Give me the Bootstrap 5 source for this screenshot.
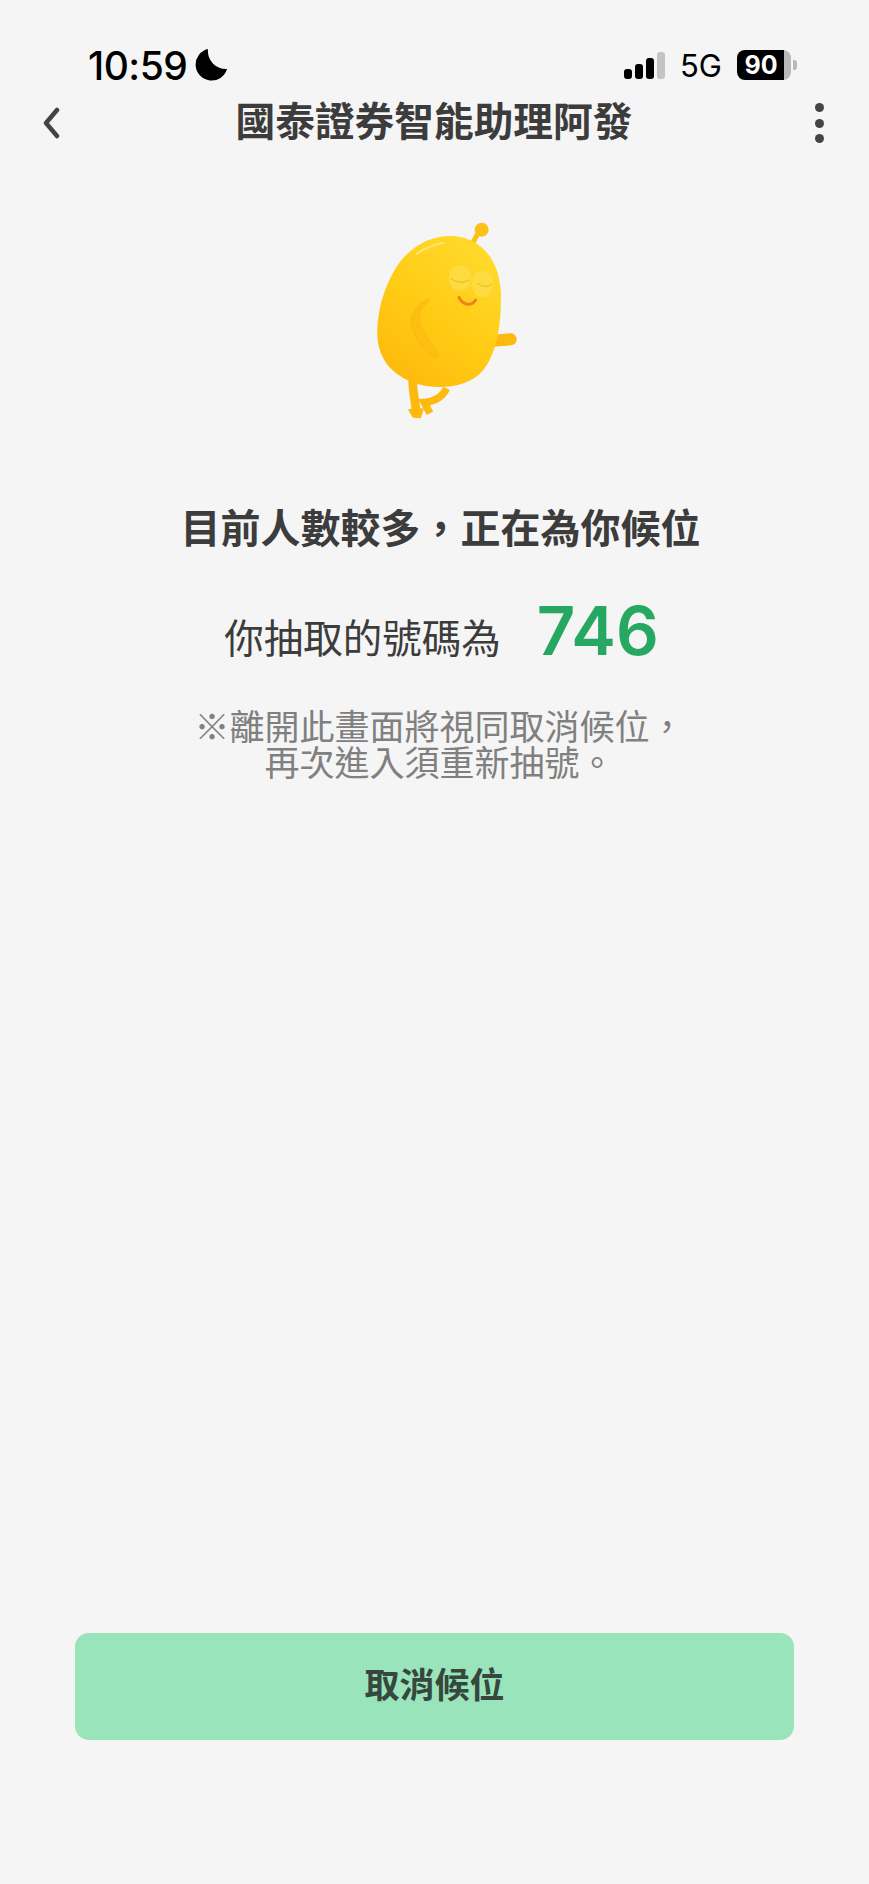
<!DOCTYPE html>
<html lang="zh-Hant">
<head>
    <meta charset="UTF-8">
    <meta name="viewport" content="width=device-width, initial-scale=1.0">
    <title>國泰證券智能助理阿發</title>
    <link rel="stylesheet" href="https://cdn.jsdelivr.net/npm/bootstrap@5.3.0/dist/css/bootstrap.min.css">
    <style>
        body { background: #f5f5f5; font-family: "Liberation Sans", "Noto Sans CJK TC", sans-serif; color: #3c3c3c; }
        .page-wrap { height: 1884px; }
        .status-row { height: 50px; margin-top: 40px; padding: 0 72px 0 88px; color: #000; }
        .status-time { font-family: Inter, sans-serif; font-size: 39px; font-weight: 500; line-height: 1; letter-spacing: -0.5px; }
        .status-net { font-family: Inter, sans-serif; font-size: 31px; line-height: 1; margin: 0 15px; }
        .signal-bars { height: 27px; gap: 3px; }
        .signal-bars span { width: 8px; background: #000; border-radius: 3px; }
        .battery-body { width: 54px; height: 30px; border-radius: 8px; color: #fff; font-family: Inter, sans-serif; font-size: 25px; font-weight: 700; line-height: 30px; padding-right: 6px; background: linear-gradient(90deg, #000 87%, #b9b9b9 87%); }
        .battery-nub { width: 4px; height: 10px; background: #b9b9b9; border-radius: 0 3px 3px 0; margin-left: 2px; }
        .top-bar { height: 66px; padding: 0 45px 0 42px; }
        .top-title { font-size: 39.7px; font-weight: 700; line-height: 1; white-space: nowrap; margin-right: 7px; }
        .top-dot { width: 9px; height: 9px; background: #444; border-radius: 50%; }
        .mascot-box { margin-top: 44px; height: 240px; padding-left: 21px; }
        .wait-title { font-size: 40px; font-weight: 700; line-height: 1.2; margin-top: 65px; margin-bottom: 0; padding-left: 12px; }
        .ticket-row { margin-top: 42px; height: 80px; padding-left: 14px; }
        .ticket-label { font-size: 39.5px; line-height: 1; margin-top: 10px; }
        .ticket-num { font-family: Inter, sans-serif; font-size: 67px; font-weight: 600; color: #27a862; line-height: 1; margin-left: 36px; margin-bottom: 10px; }
        .leave-note { font-size: 35px; line-height: 36px; color: #808080; margin-top: 35px; padding-left: 10px; }
        .cancel-btn { width: 719px; height: 107px; margin: auto 0 144px 75px; background: #9ae4bb; border: 0; border-radius: 14px; color: #36473d; font-size: 35px; font-weight: 700; }
        .cancel-btn:hover { background: #9ae4bb; color: #36473d; }
    </style>
</head>
<body>
<div class="page-wrap d-flex flex-column">
    <div class="status-row d-flex align-items-center">
        <span class="status-time">10:59</span>
        <svg width="32" height="32" viewBox="0 0 32 32" class="ms-2"><path d="M13 0 A16 16 0 1 0 32 20 A18 18 0 0 1 13 0 Z" fill="#000"/></svg>
        <div class="ms-auto d-flex align-items-center">
            <div class="signal-bars d-flex align-items-end">
                <span style="height: 10px"></span>
                <span style="height: 15px"></span>
                <span style="height: 21px"></span>
                <span style="height: 27px; background: #c4c4c4"></span>
            </div>
            <span class="status-net">5G</span>
            <div class="battery-body text-center">90</div>
            <div class="battery-nub"></div>
        </div>
    </div>

    <div class="top-bar d-flex align-items-center justify-content-between">
        <svg width="18" height="32" viewBox="0 0 18 32"><path d="M15 3 L4 16 L15 29" fill="none" stroke="#444" stroke-width="4.5" stroke-linecap="round" stroke-linejoin="round"/></svg>
        <div class="top-title">國泰證券智能助理阿發</div>
        <div class="d-flex flex-column" style="gap: 6.5px">
            <div class="top-dot"></div>
            <div class="top-dot"></div>
            <div class="top-dot"></div>
        </div>
    </div>

    <div class="mascot-box text-center">
        <svg width="190" height="240" viewBox="0 0 570 720">
            <defs>
                <linearGradient id="bodyFill" x1="0.85" y1="0" x2="0.2" y2="1">
                    <stop offset="0" stop-color="#ffdb2e"/>
                    <stop offset="0.55" stop-color="#ffcb14"/>
                    <stop offset="1" stop-color="#feb90c"/>
                </linearGradient>
            </defs>
            <path d="M365 135 L388 92" stroke="#fdc116" stroke-width="15" fill="none"/>
            <circle cx="395" cy="89" r="21" fill="#fdc116"/>
            <path d="M188 540 C188 580 198 610 198 635" stroke="#fdb90d" stroke-width="26" fill="none"/>
            <path d="M290 565 C275 595 250 605 222 607 L240 640" stroke="#fdb90d" stroke-width="22" fill="none"/>
            <path d="M178 630 L218 628 L210 652 L190 650 Z" fill="#fdb90d" stroke="#fdb90d" stroke-width="6" stroke-linejoin="round"/>
            <path d="M430 422 L482 418" stroke="#fdb90d" stroke-width="36" stroke-linecap="round" fill="none"/>
            <path d="M300 108 C385 108 445 170 452 270 C456 350 445 455 400 510 C355 565 260 572 190 548 C120 522 82 470 82 400 C82 320 110 240 150 185 C190 135 245 108 300 108 Z" fill="url(#bodyFill)"/>
            <path d="M200 162 C220 146 250 134 280 128" stroke="#ffe674" stroke-width="6" stroke-linecap="round" fill="none"/>
            <ellipse cx="330" cy="234" rx="34" ry="38" fill="#ffdb42"/>
            <ellipse cx="398" cy="252" rx="32" ry="40" fill="#ffdb42"/>
            <path d="M303 236 C318 248 340 250 358 240" stroke="#f3c62c" stroke-width="5" fill="none" stroke-linecap="round"/>
            <path d="M382 250 C395 260 410 262 424 254" stroke="#f3c62c" stroke-width="5" fill="none" stroke-linecap="round"/>
            <path d="M327 292 C338 316 364 320 377 300" stroke="#f0801a" stroke-width="9" fill="none" stroke-linecap="round"/>
            <path d="M235 295 C200 315 175 345 185 380 C197 420 225 450 248 472 C262 478 268 462 258 450 C235 420 208 385 208 350 C210 325 225 315 240 300" fill="#fdbe12" stroke="#f7b30c" stroke-width="2"/>
        </svg>
    </div>

    <h1 class="wait-title text-center">目前人數較多，正在為你候位</h1>

    <div class="ticket-row d-flex justify-content-center align-items-center">
        <span class="ticket-label">你抽取的號碼為</span>
        <span class="ticket-num">746</span>
    </div>

    <p class="leave-note text-center mb-0">※離開此畫面將視同取消候位，<br>再次進入須重新抽號。</p>

    <button type="button" class="btn cancel-btn">取消候位</button>
</div>
<script src="https://cdn.jsdelivr.net/npm/bootstrap@5.3.0/dist/js/bootstrap.bundle.min.js"></script>
</body>
</html>
